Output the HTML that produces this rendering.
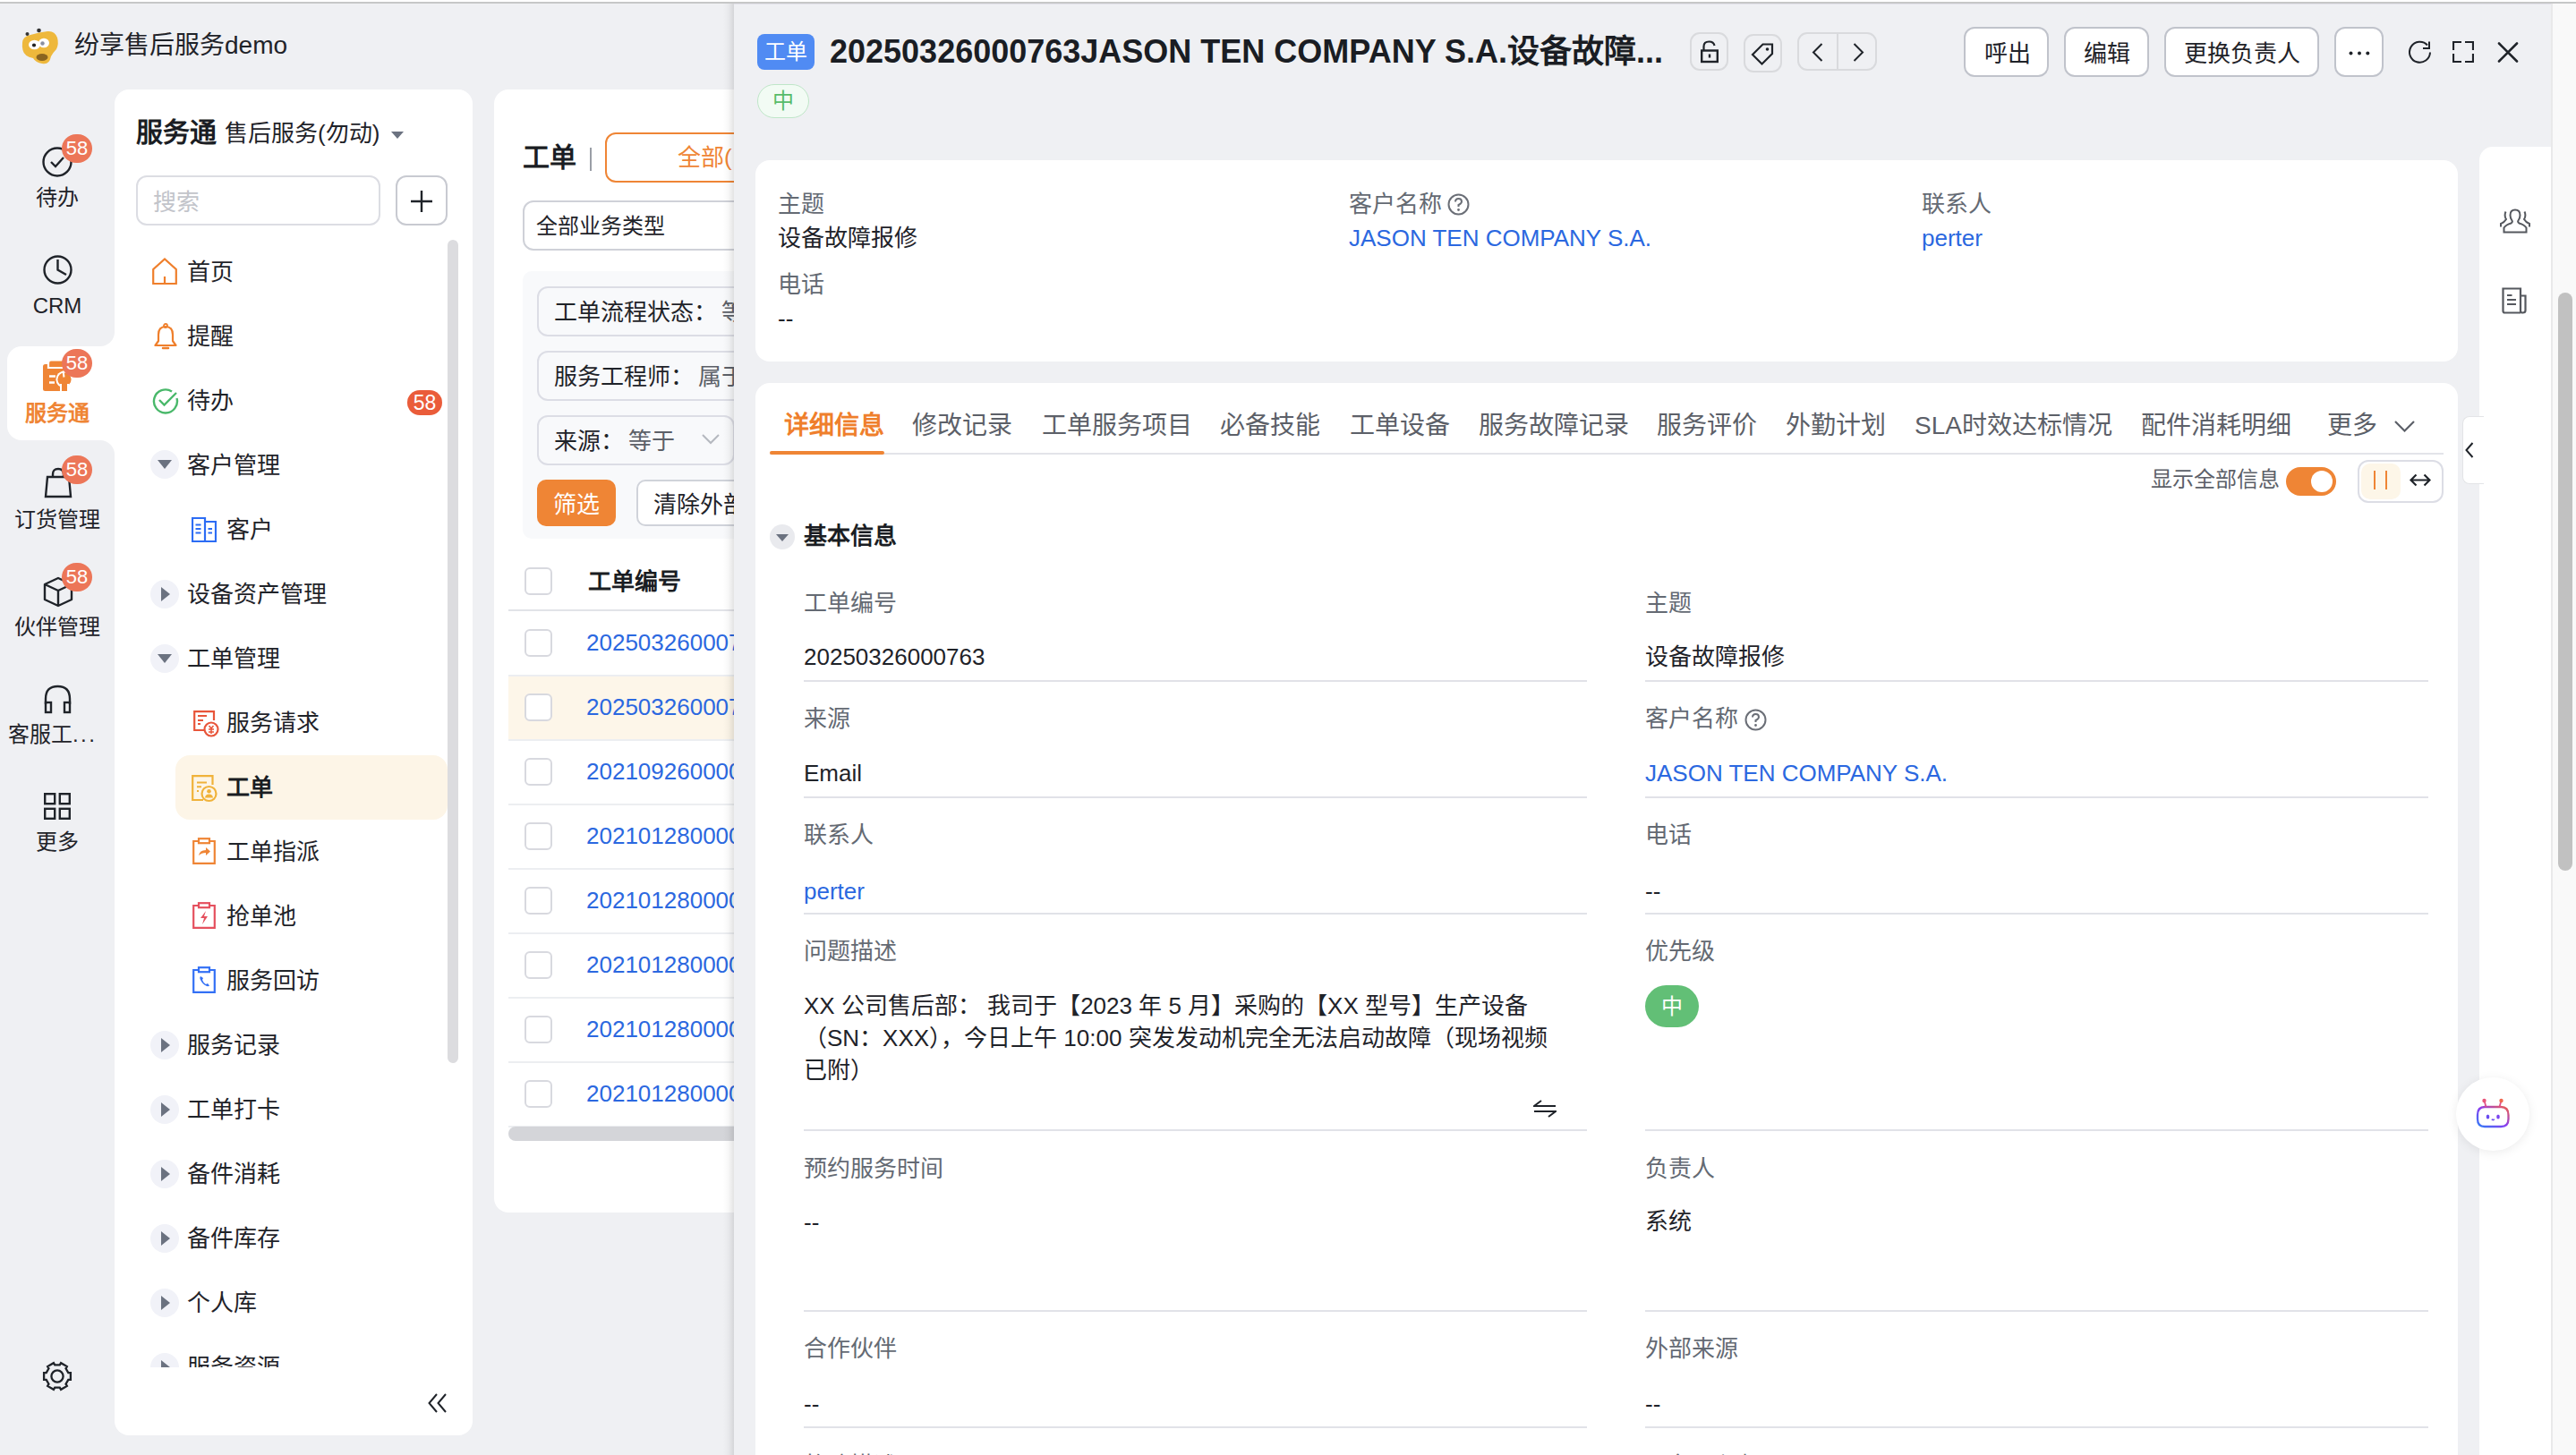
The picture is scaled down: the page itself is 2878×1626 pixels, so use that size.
<!DOCTYPE html>
<html lang="zh-CN"><head><meta charset="utf-8">
<style>
*{box-sizing:border-box;margin:0;padding:0}
html,body{width:2878px;height:1626px;overflow:hidden}
body{background:#eff0f3;font-family:"Liberation Sans",sans-serif;color:#1f2329;position:relative}
.a{position:absolute}
.t{position:absolute;white-space:nowrap;line-height:1}
svg{display:block}
.badge{position:absolute;width:34px;height:32px;border-radius:16px;background:#ec7658;color:#fff;font-size:22px;line-height:32px;text-align:center}
.rl{position:absolute;left:0;width:128px;text-align:center;font-size:24px;line-height:24px;color:#1f2329}
.mi{position:absolute;font-size:26px;line-height:26px;color:#1f2329;white-space:nowrap}
.tog{position:absolute;left:168px;width:32px;height:32px;border-radius:16px;background:#f1f2f8}
.tog:after{content:"";position:absolute;left:8px;top:11px;border-left:8px solid transparent;border-right:8px solid transparent;border-top:10px solid #6b7280}
.tog.r:after{left:12px;top:8px;border-top:8px solid transparent;border-bottom:8px solid transparent;border-left:10px solid #6b7280;border-right:0}
.lbl{font-size:26px;line-height:26px;color:#646a73}
.val{font-size:26px;line-height:26px;color:#1f2329}
.blue{color:#2b68e0}
.tab{font-size:28px;line-height:28px;color:#5c6068}
.tab.act{color:#ef7f2c;font-weight:bold}
.desc{font-size:26px;line-height:36px;color:#1f2329;white-space:nowrap}
</style></head><body>
<!-- top line -->
<div class="a" style="left:0;top:0;width:2878px;height:2px;background:#fff"></div>
<div class="a" style="left:0;top:2px;width:2878px;height:2px;background:#c6c7c7"></div>

<!-- logo -->
<svg class="a" style="left:24px;top:30px" width="42" height="44" viewBox="0 0 42 44">
<path d="M1 18 Q1 11 10 9 Q20 6 29 5 Q37 4 40 12 Q42 19 39 25 Q35 29 33 33 Q31 43 23 41 Q16 40 13 35 Q3 33 1.5 26 Q0.5 22 1 18Z" fill="#eeb83c"/>
<ellipse cx="14.5" cy="20" rx="6.5" ry="5.2" fill="#fff"/><ellipse cx="25" cy="18" rx="6" ry="5.2" fill="#fff"/>
<circle cx="14" cy="20.5" r="2.1" fill="#222"/><circle cx="23.5" cy="18.5" r="2.2" fill="#8a8fa0"/>
<ellipse cx="23" cy="34" rx="6.5" ry="4" fill="#8a6420"/>
<circle cx="6.5" cy="8" r="2" fill="#333"/><circle cx="19.5" cy="4" r="2.3" fill="#333"/>
</svg>
<div class="t" style="left:83px;top:37px;font-size:28px;line-height:28px;color:#1f2329">纷享售后服务demo</div>

<!-- left rail -->
<div class="a" style="left:8px;top:387px;width:140px;height:105px;background:#fff;border-radius:16px 0 0 16px"></div>
<!-- inverse corners -->
<div class="a" style="left:112px;top:371px;width:16px;height:16px;background:#fff"></div>
<div class="a" style="left:112px;top:371px;width:16px;height:16px;background:#eff0f3;border-radius:0 0 16px 0"></div>
<div class="a" style="left:112px;top:492px;width:16px;height:16px;background:#fff"></div>
<div class="a" style="left:112px;top:492px;width:16px;height:16px;background:#eff0f3;border-radius:0 16px 0 0"></div>

<!-- rail icons -->
<svg class="a" style="left:47px;top:164px" width="34" height="34" viewBox="0 0 34 34"><circle cx="17" cy="17" r="15.5" fill="none" stroke="#1f2329" stroke-width="2.4"/><path d="M10 17 L15 22 L24 12" fill="none" stroke="#1f2329" stroke-width="2.4"/></svg>
<div class="badge" style="left:69px;top:150px">58</div>
<div class="rl" style="top:209px">待办</div>

<svg class="a" style="left:48px;top:285px" width="33" height="33" viewBox="0 0 33 33"><circle cx="16.5" cy="16.5" r="15" fill="none" stroke="#1f2329" stroke-width="2.4"/><path d="M16.5 5 V16.5 L26 22" fill="none" stroke="#1f2329" stroke-width="2.4"/></svg>
<div class="rl" style="top:330px;font-size:24px">CRM</div>

<svg class="a" style="left:48px;top:402px" width="34" height="36" viewBox="0 0 34 36"><rect x="0" y="5" width="27" height="30" rx="2.5" fill="#ef8535"/><rect x="7" y="1.5" width="20" height="6" rx="2" fill="#ef8535"/><path d="M6 0 V9 H28" stroke="#fff" stroke-width="2.2" fill="none"/><path d="M7 18.5 H14 M7 25.5 H13" stroke="#fff" stroke-width="2.4"/><circle cx="24" cy="22" r="9.6" fill="#fff"/><circle cx="24" cy="22" r="7.6" fill="#ef8535"/><rect x="19" y="27" width="10" height="9" fill="#fff"/><rect x="21" y="27" width="6" height="8" fill="#ef8535"/><path d="M22.5 12.5 L23.5 19.5" stroke="#fff" stroke-width="2"/></svg>
<div class="badge" style="left:69px;top:390px">58</div>
<div class="rl" style="top:450px;color:#ef8535;font-weight:bold">服务通</div>

<svg class="a" style="left:48px;top:522px" width="34" height="35" viewBox="0 0 34 35"><path d="M3 33 L5 11 H29 L31 33Z" fill="none" stroke="#1f2329" stroke-width="2.4"/><path d="M11 11 V8 Q11 2 17 2 Q23 2 23 8 V11" fill="none" stroke="#1f2329" stroke-width="2.4"/></svg>
<div class="badge" style="left:69px;top:509px">58</div>
<div class="rl" style="top:569px">订货管理</div>

<svg class="a" style="left:48px;top:644px" width="34" height="35" viewBox="0 0 34 35"><path d="M17 2 L32 9 V26 L17 33 L2 26 V9Z M2 9 L17 16 L32 9 M17 16 V33" fill="none" stroke="#1f2329" stroke-width="2.4" stroke-linejoin="round"/></svg>
<div class="badge" style="left:69px;top:629px">58</div>
<div class="rl" style="top:689px">伙伴管理</div>

<svg class="a" style="left:48px;top:765px" width="33" height="33" viewBox="0 0 33 33"><path d="M3 22 V16 Q3 2 16.5 2 Q30 2 30 16 V22" fill="none" stroke="#1f2329" stroke-width="2.4"/><rect x="3" y="20" width="6" height="11" fill="none" stroke="#1f2329" stroke-width="2.4"/><rect x="24" y="20" width="6" height="11" fill="none" stroke="#1f2329" stroke-width="2.4"/></svg>
<div class="t" style="left:9px;top:809px;font-size:24px;line-height:24px">客服工<span style="letter-spacing:2.4px">...</span></div>

<svg class="a" style="left:49px;top:886px" width="30" height="30" viewBox="0 0 30 30"><rect x="1.2" y="1.2" width="11" height="11" fill="none" stroke="#1f2329" stroke-width="2.4"/><rect x="17.8" y="1.2" width="11" height="11" fill="none" stroke="#1f2329" stroke-width="2.4"/><rect x="1.2" y="17.8" width="11" height="11" fill="none" stroke="#1f2329" stroke-width="2.4"/><rect x="17.8" y="17.8" width="11" height="11" fill="none" stroke="#1f2329" stroke-width="2.4"/></svg>
<div class="rl" style="top:929px">更多</div>

<svg class="a" style="left:47px;top:1520.5px" width="34" height="34" viewBox="0 0 34 34"><path d="M29.30 13.10 L31.90 13.10 L31.90 20.90 L29.30 20.90 L26.53 25.70 L27.83 27.95 L21.07 31.85 L19.77 29.60 L14.23 29.60 L12.93 31.85 L6.17 27.95 L7.47 25.70 L4.70 20.90 L2.10 20.90 L2.10 13.10 L4.70 13.10 L7.47 8.30 L6.17 6.05 L12.93 2.15 L14.23 4.40 L19.77 4.40 L21.07 2.15 L27.83 6.05 L26.53 8.30Z" fill="none" stroke="#1f2329" stroke-width="2.3" stroke-linejoin="miter"/><circle cx="17" cy="17" r="6.6" fill="none" stroke="#1f2329" stroke-width="2.3"/></svg>

<!-- NAV PANEL -->
<div class="a" style="left:128px;top:100px;width:400px;height:1504px;background:#fff;border-radius:16px"></div>
<!-- nav header -->
<div class="t" style="left:152px;top:133px;font-size:30px;line-height:30px;font-weight:bold;color:#1a1d23">服务通</div>
<div class="t" style="left:251px;top:136px;font-size:26px;line-height:26px;color:#1f2329">售后服务(勿动)</div>
<div class="a" style="left:437px;top:147px;width:0;height:0;border-left:7px solid transparent;border-right:7px solid transparent;border-top:8px solid #6b7280"></div>
<div class="a" style="left:152px;top:196px;width:273px;height:56px;border:2px solid #dcdde3;border-radius:12px"></div>
<div class="t" style="left:171px;top:213px;font-size:26px;line-height:26px;color:#c2c4ca">搜索</div>
<div class="a" style="left:442px;top:196px;width:58px;height:56px;border:2px solid #c8cad1;border-radius:12px"></div>
<svg class="a" style="left:459px;top:213px" width="24" height="24" viewBox="0 0 24 24"><path d="M12 0 V24 M0 12 H24" stroke="#1f2329" stroke-width="2.4"/></svg>
<!-- scrollbar -->
<div class="a" style="left:500px;top:268px;width:12px;height:920px;background:#dcdcdf;border-radius:6px"></div>
<!-- menu -->
<div class="a" style="left:128px;top:268px;width:372px;height:1260px;overflow:hidden">
 <div class="a" style="left:0;top:-268px;width:372px;height:1800px">
  <svg class="a" style="left:42px;top:288px" width="28" height="30" viewBox="0 0 28 30"><path d="M1.2 29 V13 L14 1.5 L26.8 13 V29 Z M14 21 V29" fill="none" stroke="#ef7f2c" stroke-width="2.2"/></svg>
  <div class="mi" style="left:81px;top:291px">首页</div>
  <svg class="a" style="left:44px;top:361px" width="26" height="30" viewBox="0 0 26 30"><path d="M13 4 Q5 4 5 13 V20 L1.5 25 H24.5 L21 20 V13 Q21 4 13 4Z" fill="none" stroke="#ef7f2c" stroke-width="2.2" stroke-linejoin="round"/><circle cx="13" cy="3" r="2" fill="none" stroke="#ef7f2c" stroke-width="1.8"/><path d="M10 28 H16" stroke="#ef7f2c" stroke-width="2.5" stroke-linecap="round"/></svg>
  <div class="mi" style="left:81px;top:363px">提醒</div>
  <svg class="a" style="left:42px;top:433px" width="30" height="30" viewBox="0 0 30 30"><path d="M27.5 12 A13 13 0 1 1 22 4.5" fill="none" stroke="#49b86a" stroke-width="2.4"/><path d="M8 14 L13.5 19.5 L27 6" fill="none" stroke="#49b86a" stroke-width="2.4"/></svg>
  <div class="mi" style="left:81px;top:435px">待办</div>
  <div class="badge" style="left:327px;top:436px;width:39px;height:28px;border-radius:14px;background:#ea5c3a;font-size:23px;line-height:28px">58</div>

  <div class="tog" style="left:40px;top:503px"></div>
  <div class="mi" style="left:81px;top:507px">客户管理</div>
  <svg class="a" style="left:86px;top:578px" width="28" height="28" viewBox="0 0 28 28"><path d="M1 1 H15 V27 H1Z M15 5 H27 V27 H15" fill="none" stroke="#2c6cf4" stroke-width="2.2"/><path d="M4.5 8.5 H10.5 M4.5 13 H10.5 M4.5 17.5 H10.5 M18.5 13 H23 M18.5 17.5 H23" stroke="#2c6cf4" stroke-width="2"/></svg>
  <div class="mi" style="left:125px;top:579px">客户</div>

  <div class="tog r" style="left:40px;top:648px"></div>
  <div class="mi" style="left:81px;top:651px">设备资产管理</div>
  <div class="tog" style="left:40px;top:720px"></div>
  <div class="mi" style="left:81px;top:723px">工单管理</div>

  <svg class="a" style="left:88px;top:794px" width="29" height="30" viewBox="0 0 29 30"><path d="M15 22 H1.2 V1.2 H23 V11" fill="none" stroke="#e8553a" stroke-width="2.2"/><path d="M5 6 H15 M5 11 H11 M5 15 H8" stroke="#e8553a" stroke-width="2"/><circle cx="20" cy="21" r="7.5" fill="#fff" stroke="#e8553a" stroke-width="2.2"/><path d="M17.5 17 L20 20 L22.5 17 M17 21 H23 M17 24 H23 M20 20 V26" stroke="#e8553a" stroke-width="1.5" fill="none"/></svg>
  <div class="mi" style="left:125px;top:795px">服务请求</div>

  <div class="a" style="left:68px;top:844px;width:304px;height:72px;background:#fdf5e7;border-radius:16px"></div>
  <svg class="a" style="left:86px;top:866px" width="30" height="32" viewBox="0 0 30 32"><path d="M13 28 H1.2 V1.2 H23.5 V11" fill="none" stroke="#f0b23a" stroke-width="2.2"/><path d="M6 8.6 H17 M6 13.2 H11 M6 18 H8" stroke="#f0b23a" stroke-width="2"/><circle cx="19.5" cy="21" r="8" fill="#fdf5e7" stroke="#f0b23a" stroke-width="2.2"/><circle cx="19.5" cy="18.2" r="2.3" fill="#f0b23a"/><path d="M15 25.5 Q15.5 21.5 19.5 21.5 Q23.5 21.5 24 25.5Z" fill="#f0b23a"/></svg>
  <div class="mi" style="left:125px;top:867px;font-weight:bold;color:#1a1d23">工单</div>

  <svg class="a" style="left:87px;top:936px" width="26" height="30" viewBox="0 0 26 30"><path d="M6 4 H1.2 V28.8 H24.8 V4 H20" fill="none" stroke="#ef8535" stroke-width="2.2"/><rect x="7" y="1.2" width="12" height="5" fill="none" stroke="#ef8535" stroke-width="2.2"/><path d="M7 20 Q8 14 15 14 V11 L20 15.5 L15 20 V17 Q10 17 7 20Z" fill="#ef8535"/></svg>
  <div class="mi" style="left:125px;top:939px">工单指派</div>

  <svg class="a" style="left:87px;top:1008px" width="26" height="30" viewBox="0 0 26 30"><path d="M6 4 H1.2 V28.8 H24.8 V4 H20" fill="none" stroke="#e5505e" stroke-width="2.2"/><rect x="7" y="1.2" width="12" height="5" fill="none" stroke="#e5505e" stroke-width="2.2"/><path d="M15 10 L9 18 H13 L11 25 L17 16 H13Z" fill="#e5505e"/></svg>
  <div class="mi" style="left:125px;top:1011px">抢单池</div>

  <svg class="a" style="left:87px;top:1080px" width="26" height="30" viewBox="0 0 26 30"><path d="M6 4 H1.2 V28.8 H24.8 V4 H20" fill="none" stroke="#3370f5" stroke-width="2.2"/><rect x="7" y="1.2" width="12" height="5" fill="none" stroke="#3370f5" stroke-width="2.2"/><path d="M9 11 Q8 12 8.5 14 Q11 20 16 22 Q18 22.5 19 21.5 L17 19 L15 20 Q12 18 11 15 L12 13Z" fill="#3370f5"/></svg>
  <div class="mi" style="left:125px;top:1083px">服务回访</div>

  <div class="tog r" style="left:40px;top:1152px"></div>
  <div class="mi" style="left:81px;top:1155px">服务记录</div>
  <div class="tog r" style="left:40px;top:1224px"></div>
  <div class="mi" style="left:81px;top:1227px">工单打卡</div>
  <div class="tog r" style="left:40px;top:1296px"></div>
  <div class="mi" style="left:81px;top:1299px">备件消耗</div>
  <div class="tog r" style="left:40px;top:1368px"></div>
  <div class="mi" style="left:81px;top:1371px">备件库存</div>
  <div class="tog r" style="left:40px;top:1440px"></div>
  <div class="mi" style="left:81px;top:1443px">个人库</div>
  <div class="tog r" style="left:40px;top:1512px"></div>
  <div class="mi" style="left:81px;top:1515px">服务资源</div>
 </div>
</div>
<svg class="a" style="left:478px;top:1557px" width="21" height="22" viewBox="0 0 21 22"><path d="M10 1 L1.5 11 L10 21 M20 1 L11.5 11 L20 21" fill="none" stroke="#1f2329" stroke-width="2"/></svg>


<!-- MIDDLE PANEL -->
<div class="a" style="left:552px;top:100px;width:400px;height:1255px;background:#fff;border-radius:16px"></div>
<div class="a" style="left:552px;top:100px;width:300px;height:1255px;overflow:hidden">
<div class="a" style="left:-552px;top:-100px;width:900px;height:1400px">
<div class="t" style="left:584px;top:161px;font-size:30px;line-height:30px;font-weight:bold;color:#1a1d23">工单</div>
<div class="a" style="left:659px;top:165px;width:2px;height:26px;background:#9a9ea6"></div>
<div class="a" style="left:676px;top:148px;width:300px;height:56px;border:2px solid #ef8535;border-radius:12px"></div>
<div class="t" style="left:757px;top:163px;font-size:26px;line-height:26px;color:#ef8535">全部(</div>
<div class="a" style="left:584px;top:224px;width:400px;height:56px;border:2px solid #cfd1d8;border-radius:12px"></div>
<div class="t" style="left:599px;top:241px;font-size:24px;line-height:24px;color:#1f2329">全部业务类型</div>
<div class="a" style="left:584px;top:303px;width:400px;height:299px;background:#f8f9fb;border-radius:10px"></div>
<div class="a" style="left:600px;top:320px;width:400px;height:56px;border:2px solid #dcdde5;border-radius:12px"></div>
<div class="t" style="left:619px;top:336px;font-size:26px;line-height:26px;color:#1f2329">工单流程状态：<span style="color:#5c6068;margin-left:5px">等于</span></div>
<div class="a" style="left:600px;top:392px;width:400px;height:56px;border:2px solid #dcdde5;border-radius:12px"></div>
<div class="t" style="left:619px;top:408px;font-size:26px;line-height:26px;color:#1f2329">服务工程师：<span style="color:#5c6068;margin-left:5px">属于</span></div>
<div class="a" style="left:600px;top:464px;width:221px;height:56px;border:2px solid #dcdde5;border-radius:12px"></div>
<div class="t" style="left:619px;top:480px;font-size:26px;line-height:26px;color:#1f2329">来源：<span style="color:#5c6068;margin-left:5px">等于</span></div>
<svg class="a" style="left:784px;top:485px" width="20" height="12" viewBox="0 0 20 12"><path d="M1 1 L10 10 L19 1" fill="none" stroke="#b5b8bf" stroke-width="2"/></svg>
<div class="a" style="left:600px;top:536px;width:88px;height:52px;background:#ef8535;border-radius:10px"></div>
<div class="t" style="left:618px;top:551px;font-size:26px;line-height:26px;color:#fff">筛选</div>
<div class="a" style="left:711px;top:536px;width:300px;height:52px;border:2px solid #d0d3da;border-radius:10px;background:#fff"></div>
<div class="t" style="left:730px;top:551px;font-size:26px;line-height:26px;color:#1f2329">清除外部筛选</div>
<!-- table -->
<div class="a" style="left:586px;top:634px;width:31px;height:31px;border:2px solid #d8d9df;border-radius:6px;background:#fff"></div>
<div class="t" style="left:657px;top:637px;font-size:26px;line-height:26px;font-weight:bold;color:#1a1d23">工单编号</div>
<div class="a" style="left:568px;top:681px;width:400px;height:2px;background:#e2e3e8"></div>
<div class="a" style="left:568px;top:755px;width:400px;height:71px;background:#fdf6e9"></div>
<div class="a" style="left:586px;top:703px;width:31px;height:31px;border:2px solid #d8d9df;border-radius:6px;background:#fff"></div>
<div class="t" style="left:655px;top:705px;font-size:26px;line-height:26px;color:#2b68e0">20250326000763</div>
<div class="a" style="left:568px;top:754px;width:400px;height:2px;background:#eceef1"></div>
<div class="a" style="left:586px;top:775px;width:31px;height:31px;border:2px solid #d8d9df;border-radius:6px;background:#fff"></div>
<div class="t" style="left:655px;top:777px;font-size:26px;line-height:26px;color:#2b68e0">20250326000762</div>
<div class="a" style="left:568px;top:826px;width:400px;height:2px;background:#eceef1"></div>
<div class="a" style="left:586px;top:847px;width:31px;height:31px;border:2px solid #d8d9df;border-radius:6px;background:#fff"></div>
<div class="t" style="left:655px;top:849px;font-size:26px;line-height:26px;color:#2b68e0">20210926000001</div>
<div class="a" style="left:568px;top:898px;width:400px;height:2px;background:#eceef1"></div>
<div class="a" style="left:586px;top:919px;width:31px;height:31px;border:2px solid #d8d9df;border-radius:6px;background:#fff"></div>
<div class="t" style="left:655px;top:921px;font-size:26px;line-height:26px;color:#2b68e0">20210128000005</div>
<div class="a" style="left:568px;top:970px;width:400px;height:2px;background:#eceef1"></div>
<div class="a" style="left:586px;top:991px;width:31px;height:31px;border:2px solid #d8d9df;border-radius:6px;background:#fff"></div>
<div class="t" style="left:655px;top:993px;font-size:26px;line-height:26px;color:#2b68e0">20210128000004</div>
<div class="a" style="left:568px;top:1042px;width:400px;height:2px;background:#eceef1"></div>
<div class="a" style="left:586px;top:1063px;width:31px;height:31px;border:2px solid #d8d9df;border-radius:6px;background:#fff"></div>
<div class="t" style="left:655px;top:1065px;font-size:26px;line-height:26px;color:#2b68e0">20210128000003</div>
<div class="a" style="left:568px;top:1114px;width:400px;height:2px;background:#eceef1"></div>
<div class="a" style="left:586px;top:1135px;width:31px;height:31px;border:2px solid #d8d9df;border-radius:6px;background:#fff"></div>
<div class="t" style="left:655px;top:1137px;font-size:26px;line-height:26px;color:#2b68e0">20210128000002</div>
<div class="a" style="left:568px;top:1186px;width:400px;height:2px;background:#eceef1"></div>
<div class="a" style="left:586px;top:1207px;width:31px;height:31px;border:2px solid #d8d9df;border-radius:6px;background:#fff"></div>
<div class="t" style="left:655px;top:1209px;font-size:26px;line-height:26px;color:#2b68e0">20210128000001</div>
<div class="a" style="left:568px;top:1258px;width:400px;height:2px;background:#eceef1"></div>

<div class="a" style="left:568px;top:1259px;width:400px;height:16px;background:#d4d5d9;border-radius:8px"></div>
</div></div>


<!-- DRAWER -->
<div class="a" style="left:808px;top:4px;width:12px;height:1622px;background:linear-gradient(to right,rgba(0,0,0,0),rgba(0,0,0,0.03) 50%,rgba(0,0,0,0.11))"></div>
<div class="a" style="left:820px;top:4px;width:2058px;height:1622px;background:#eff0f3;border-top:1.5px solid #e2e2ea"></div>
<!-- header -->
<div class="a" style="left:846px;top:38px;width:64px;height:40px;background:#508bf3;border-radius:8px;color:#fff;font-size:24px;line-height:40px;text-align:center">工单</div>
<div class="t" style="left:927px;top:40px;font-size:36px;line-height:36px;font-weight:bold;color:#1a1d23">20250326000763JASON TEN COMPANY S.A.设备故障...</div>
<div class="a" style="left:846px;top:94px;width:58px;height:38px;border:1.5px solid #bfe6c8;background:#f2fbf4;border-radius:19px;color:#58bb6a;font-size:24px;line-height:35px;text-align:center">中</div>

<div class="a" style="left:1888px;top:36px;width:43px;height:43px;border:2px solid #d9dadd;border-radius:11px"></div>
<svg class="a" style="left:1899px;top:45px" width="22" height="26" viewBox="0 0 22 26"><path d="M4.5 11 V7 Q4.5 1.5 10.5 1.5 Q15.5 1.5 16.5 6" fill="none" stroke="#1f2329" stroke-width="2.2"/><rect x="2.2" y="11.5" width="17.6" height="12.5" fill="none" stroke="#1f2329" stroke-width="2.4"/><path d="M11 15.5 V19.5" stroke="#1f2329" stroke-width="2.4"/></svg>
<div class="a" style="left:1948px;top:38px;width:43px;height:43px;border:2px solid #d9dadd;border-radius:11px"></div>
<svg class="a" style="left:1956px;top:47px" width="27" height="27" viewBox="0 0 27 27"><path d="M2 14 L13.5 2.5 H24 V13 L12.5 24.5 Z" fill="none" stroke="#1f2329" stroke-width="2.2" stroke-linejoin="miter"/><circle cx="18.5" cy="8" r="1.8" fill="#1f2329"/></svg>
<div class="a" style="left:2008px;top:36px;width:89px;height:43px;border:2px solid #d9dadd;border-radius:11px"></div>
<div class="a" style="left:2052px;top:38px;width:2px;height:39px;background:#d9dadd"></div>
<svg class="a" style="left:2024px;top:48px" width="13" height="21" viewBox="0 0 13 21"><path d="M11.5 1 L2 10.5 L11.5 20" fill="none" stroke="#1f2329" stroke-width="2"/></svg>
<svg class="a" style="left:2070px;top:48px" width="13" height="21" viewBox="0 0 13 21"><path d="M1.5 1 L11 10.5 L1.5 20" fill="none" stroke="#1f2329" stroke-width="2"/></svg>

<div class="a" style="left:2194px;top:30px;width:95px;height:56px;border:2px solid #c0c3cb;border-radius:12px;background:#fff"></div>
<div class="t" style="left:2217px;top:47px;font-size:26px;line-height:26px">呼出</div>
<div class="a" style="left:2306px;top:30px;width:95px;height:56px;border:2px solid #c0c3cb;border-radius:12px;background:#fff"></div>
<div class="t" style="left:2328px;top:47px;font-size:26px;line-height:26px">编辑</div>
<div class="a" style="left:2418px;top:30px;width:173px;height:56px;border:2px solid #c0c3cb;border-radius:12px;background:#fff"></div>
<div class="t" style="left:2440px;top:47px;font-size:26px;line-height:26px">更换负责人</div>
<div class="a" style="left:2608px;top:30px;width:55px;height:56px;border:2px solid #c0c3cb;border-radius:12px;background:#fff"></div>
<svg class="a" style="left:2624px;top:57px" width="24" height="5" viewBox="0 0 24 5"><circle cx="2.5" cy="2.5" r="2" fill="#1f2329"/><circle cx="12" cy="2.5" r="2" fill="#1f2329"/><circle cx="21.3" cy="2.5" r="2" fill="#1f2329"/></svg>
<svg class="a" style="left:2691px;top:45px" width="26" height="26" viewBox="0 0 26 26"><path d="M24 13.5 A11.5 11.5 0 1 1 21 5.5" fill="none" stroke="#1f2329" stroke-width="2"/><path d="M23 1.5 V9 H16" fill="none" stroke="#1f2329" stroke-width="2"/></svg>
<svg class="a" style="left:2740px;top:46px" width="24" height="24" viewBox="0 0 24 24"><path d="M1 10 V1 H10 M14 1 H23 V10 M23 14 V23 H14 M10 23 H1 V14" fill="none" stroke="#1f2329" stroke-width="2.2"/></svg>
<svg class="a" style="left:2790px;top:47px" width="24" height="23" viewBox="0 0 24 23"><path d="M2 1.5 L22 21.5 M22 1.5 L2 21.5" fill="none" stroke="#1f2329" stroke-width="2.6" stroke-linecap="round"/></svg>

<!-- right strip -->
<div class="a" style="left:2850px;top:4px;width:2px;height:1622px;background:#e9e9ea"></div>
<div class="a" style="left:2852px;top:4px;width:26px;height:1622px;background:#f9f9f9"></div>
<div class="a" style="left:2858px;top:327px;width:16px;height:646px;background:#c1c1c1;border-radius:8px"></div>

<!-- side rail -->
<div class="a" style="left:2770px;top:164px;width:80px;height:1462px;background:#fff;border-radius:15px 0 0 0"></div>
<svg class="a" style="left:2793px;top:233px" width="34" height="28" viewBox="0 0 34 28"><path d="M17 1.5 Q11.5 1.5 11.5 7.5 Q11.5 11 13.5 13.5 Q14.5 15 12.5 16.5 Q7 18 4.5 21.5 V26.5 H29.5 V21.5 Q27 18 21.5 16.5 Q19.5 15 20.5 13.5 Q22.5 11 22.5 7.5 Q22.5 1.5 17 1.5Z" fill="none" stroke="#55585e" stroke-width="2"/><path d="M6.5 3.5 Q4.5 8 7 12 Q5 15.5 1 17 V20.5 M27.5 3.5 Q29.5 8 27 12 Q29 15.5 33 17 V20.5" fill="none" stroke="#55585e" stroke-width="2"/></svg>
<svg class="a" style="left:2795px;top:321px" width="30" height="30" viewBox="0 0 30 30"><path d="M21 28.5 H3.5 Q1.5 28.5 1.5 26.5 V1.5 H21 V26.5 Q21 28.5 23.5 28.5 Q26.5 28.5 26.5 26 V9.5 H21" fill="none" stroke="#55585e" stroke-width="2.2"/><path d="M6 9 H11.5 M6 14 H16 M6 19 H16" stroke="#55585e" stroke-width="2.2"/></svg>

<!-- summary card -->
<div class="a" style="left:844px;top:179px;width:1902px;height:225px;background:#fff;border-radius:16px"></div>
<div class="t lbl" style="left:869px;top:215px">主题</div>
<div class="t val" style="left:869px;top:253px">设备故障报修</div>
<div class="t lbl" style="left:869px;top:305px">电话</div>
<div class="t val" style="left:869px;top:343px">--</div>
<div class="t lbl" style="left:1507px;top:215px">客户名称</div>
<svg class="a" style="left:1617px;top:216px" width="25" height="25" viewBox="0 0 25 25"><circle cx="12.5" cy="12.5" r="11" fill="none" stroke="#6b6f77" stroke-width="2"/><path d="M9 9.5 Q9 6 12.5 6 Q16 6 16 9.3 Q16 11.5 12.5 13 V15" fill="none" stroke="#6b6f77" stroke-width="2"/><circle cx="12.5" cy="18.5" r="1.4" fill="#6b6f77"/></svg>
<div class="t val blue" style="left:1507px;top:253px">JASON TEN COMPANY S.A.</div>
<div class="t lbl" style="left:2147px;top:215px">联系人</div>
<div class="t val blue" style="left:2147px;top:253px">perter</div>

<!-- main card -->
<div class="a" style="left:844px;top:428px;width:1902px;height:1300px;background:#fff;border-radius:16px"></div>
<div class="t tab act" style="left:876px;top:462px">详细信息</div>
<div class="t tab" style="left:1019px;top:462px">修改记录</div>
<div class="t tab" style="left:1164px;top:462px">工单服务项目</div>
<div class="t tab" style="left:1363px;top:462px">必备技能</div>
<div class="t tab" style="left:1508px;top:462px">工单设备</div>
<div class="t tab" style="left:1652px;top:462px">服务故障记录</div>
<div class="t tab" style="left:1851px;top:462px">服务评价</div>
<div class="t tab" style="left:1995px;top:462px">外勤计划</div>
<div class="t tab" style="left:2139px;top:462px">SLA时效达标情况</div>
<div class="t tab" style="left:2392px;top:462px">配件消耗明细</div>
<div class="t tab" style="left:2600px;top:462px">更多</div>
<svg class="a" style="left:2675px;top:470px" width="23" height="13" viewBox="0 0 23 13"><path d="M1 1 L11.5 11.5 L22 1" fill="none" stroke="#5c6068" stroke-width="2.2"/></svg>
<div class="a" style="left:860px;top:506px;width:1870px;height:2px;background:#e3e4e9"></div>
<div class="a" style="left:860px;top:504px;width:128px;height:4px;background:#ef8535;border-radius:2px"></div>

<div class="a" style="left:2751px;top:465px;width:24px;height:76px;background:#fff;border:1.5px solid #e3e4e7;border-right:0;border-radius:8px 0 0 8px"></div>
<svg class="a" style="left:2754px;top:494px" width="10" height="18" viewBox="0 0 10 18"><path d="M8.5 1 L1.5 9 L8.5 17" fill="none" stroke="#1f2329" stroke-width="2"/></svg>

<div class="t" style="left:2403px;top:524px;font-size:24px;line-height:24px;color:#5c6068">显示全部信息</div>
<div class="a" style="left:2554px;top:522px;width:56px;height:32px;background:#ef8535;border-radius:16px"></div>
<div class="a" style="left:2582px;top:526px;width:24px;height:24px;background:#fff;border-radius:12px"></div>
<div class="a" style="left:2634px;top:514px;width:96px;height:48px;border:2px solid #dcdde5;border-radius:12px"></div>
<div class="a" style="left:2638px;top:518px;width:44px;height:40px;background:#fdf6e8;border-radius:10px"></div>
<div class="a" style="left:2652px;top:526px;width:2px;height:21px;background:#ef8535"></div>
<div class="a" style="left:2665px;top:526px;width:2px;height:21px;background:#ef8535"></div>
<svg class="a" style="left:2692px;top:527px" width="24" height="19" viewBox="0 0 24 19"><path d="M1.5 9.5 H22.5 M7.5 3.5 L1.5 9.5 L7.5 15.5 M16.5 3.5 L22.5 9.5 L16.5 15.5" fill="none" stroke="#1f2329" stroke-width="2.2"/></svg>

<div class="a" style="left:860px;top:586px;width:28px;height:28px;border-radius:14px;background:#e9eaee"></div>
<div class="a" style="left:867px;top:597px;width:0;height:0;border-left:7px solid transparent;border-right:7px solid transparent;border-top:8px solid #6b7280"></div>
<div class="t" style="left:898px;top:586px;font-size:26px;line-height:26px;font-weight:bold;color:#1a1d23">基本信息</div>

<div class="t lbl" style="left:898px;top:661px">工单编号</div>
<div class="t val " style="left:898px;top:721px">20250326000763</div>
<div class="a" style="left:898px;top:760px;width:875px;height:2px;background:#e1e2e8"></div>
<div class="t lbl" style="left:898px;top:790px">来源</div>
<div class="t val " style="left:898px;top:851px">Email</div>
<div class="a" style="left:898px;top:890px;width:875px;height:2px;background:#e1e2e8"></div>
<div class="t lbl" style="left:898px;top:920px">联系人</div>
<div class="t val blue" style="left:898px;top:983px">perter</div>
<div class="a" style="left:898px;top:1020px;width:875px;height:2px;background:#e1e2e8"></div>
<div class="t lbl" style="left:898px;top:1050px">问题描述</div>
<div class="a desc" style="left:898px;top:1106px;width:770px">XX 公司售后部： 我司于【2023 年 5 月】采购的【XX 型号】生产设备<br>（SN：XXX），今日上午 10:00 突发发动机完全无法启动故障（现场视频<br>已附）</div>
<svg class="a" style="left:1713px;top:1229px" width="26" height="20" viewBox="0 0 26 20"><path d="M9 1 L1 7 H25 M1 13 H25 L17 19" fill="none" stroke="#1f2329" stroke-width="2"/></svg>
<div class="a" style="left:898px;top:1262px;width:875px;height:2px;background:#e1e2e8"></div>
<div class="t lbl" style="left:898px;top:1293px">预约服务时间</div>
<div class="t val " style="left:898px;top:1353px">--</div>
<div class="a" style="left:898px;top:1464px;width:875px;height:2px;background:#e1e2e8"></div>
<div class="t lbl" style="left:898px;top:1494px">合作伙伴</div>
<div class="t val " style="left:898px;top:1556px">--</div>
<div class="a" style="left:898px;top:1594px;width:875px;height:2px;background:#e1e2e8"></div>
<div class="t lbl" style="left:898px;top:1625px">故障描述</div>
<div class="t lbl" style="left:1838px;top:661px">主题</div>
<div class="t val " style="left:1838px;top:721px">设备故障报修</div>
<div class="a" style="left:1838px;top:760px;width:875px;height:2px;background:#e1e2e8"></div>
<div class="t lbl" style="left:1838px;top:790px">客户名称</div>
<div class="t val blue" style="left:1838px;top:851px">JASON TEN COMPANY S.A.</div>
<svg class="a" style="left:1949px;top:792px" width="25" height="25" viewBox="0 0 25 25"><circle cx="12.5" cy="12.5" r="11" fill="none" stroke="#6b6f77" stroke-width="2"/><path d="M9 9.5 Q9 6 12.5 6 Q16 6 16 9.3 Q16 11.5 12.5 13 V15" fill="none" stroke="#6b6f77" stroke-width="2"/><circle cx="12.5" cy="18.5" r="1.4" fill="#6b6f77"/></svg>
<div class="a" style="left:1838px;top:890px;width:875px;height:2px;background:#e1e2e8"></div>
<div class="t lbl" style="left:1838px;top:920px">电话</div>
<div class="t val " style="left:1838px;top:983px">--</div>
<div class="a" style="left:1838px;top:1020px;width:875px;height:2px;background:#e1e2e8"></div>
<div class="t lbl" style="left:1838px;top:1050px">优先级</div>
<div class="a" style="left:1838px;top:1101px;width:60px;height:47px;border-radius:24px;background:#62bf76;color:#fff;font-size:24px;line-height:47px;text-align:center">中</div>
<div class="a" style="left:1838px;top:1262px;width:875px;height:2px;background:#e1e2e8"></div>
<div class="t lbl" style="left:1838px;top:1293px">负责人</div>
<div class="t val " style="left:1838px;top:1352px">系统</div>
<div class="a" style="left:1838px;top:1464px;width:875px;height:2px;background:#e1e2e8"></div>
<div class="t lbl" style="left:1838px;top:1494px">外部来源</div>
<div class="t val " style="left:1838px;top:1556px">--</div>
<div class="a" style="left:1838px;top:1594px;width:875px;height:2px;background:#e1e2e8"></div>
<div class="t lbl" style="left:1838px;top:1625px">服务工程师</div>


<!-- AI -->
<div class="a" style="left:2744px;top:1204px;width:82px;height:82px;border-radius:41px;background:#fff;box-shadow:0 2px 12px rgba(0,0,0,0.08)"></div>
<svg class="a" style="left:2764px;top:1226px" width="42" height="38" viewBox="0 0 42 38"><defs><linearGradient id="rg" x1="0" y1="1" x2="1" y2="0"><stop offset="0" stop-color="#2f7cf6"/><stop offset="0.5" stop-color="#8a3cf0"/><stop offset="1" stop-color="#f0604a"/></linearGradient></defs><path d="M12 11 H30 Q38.5 11 38.5 20 V24.5 Q38.5 33 30 33 H12 Q4 33 4 24.5 V20 Q4 11 12 11Z" fill="none" stroke="url(#rg)" stroke-width="2.3"/><path d="M13.5 11 L11.8 5 M28.5 11 L30.2 5" stroke="#e0508a" stroke-width="1.8"/><circle cx="11.5" cy="4" r="2.2" fill="#e9557a"/><circle cx="30.5" cy="4" r="2.2" fill="#f06a50"/><ellipse cx="15.5" cy="22" rx="1.8" ry="2.5" fill="#6a4cf0"/><ellipse cx="27" cy="22" rx="1.8" ry="2.5" fill="#7a44f0"/><path d="M19.8 24.8 Q21.3 26.3 22.8 24.8" fill="none" stroke="#6a4cf0" stroke-width="1.6"/></svg>

</body></html>
